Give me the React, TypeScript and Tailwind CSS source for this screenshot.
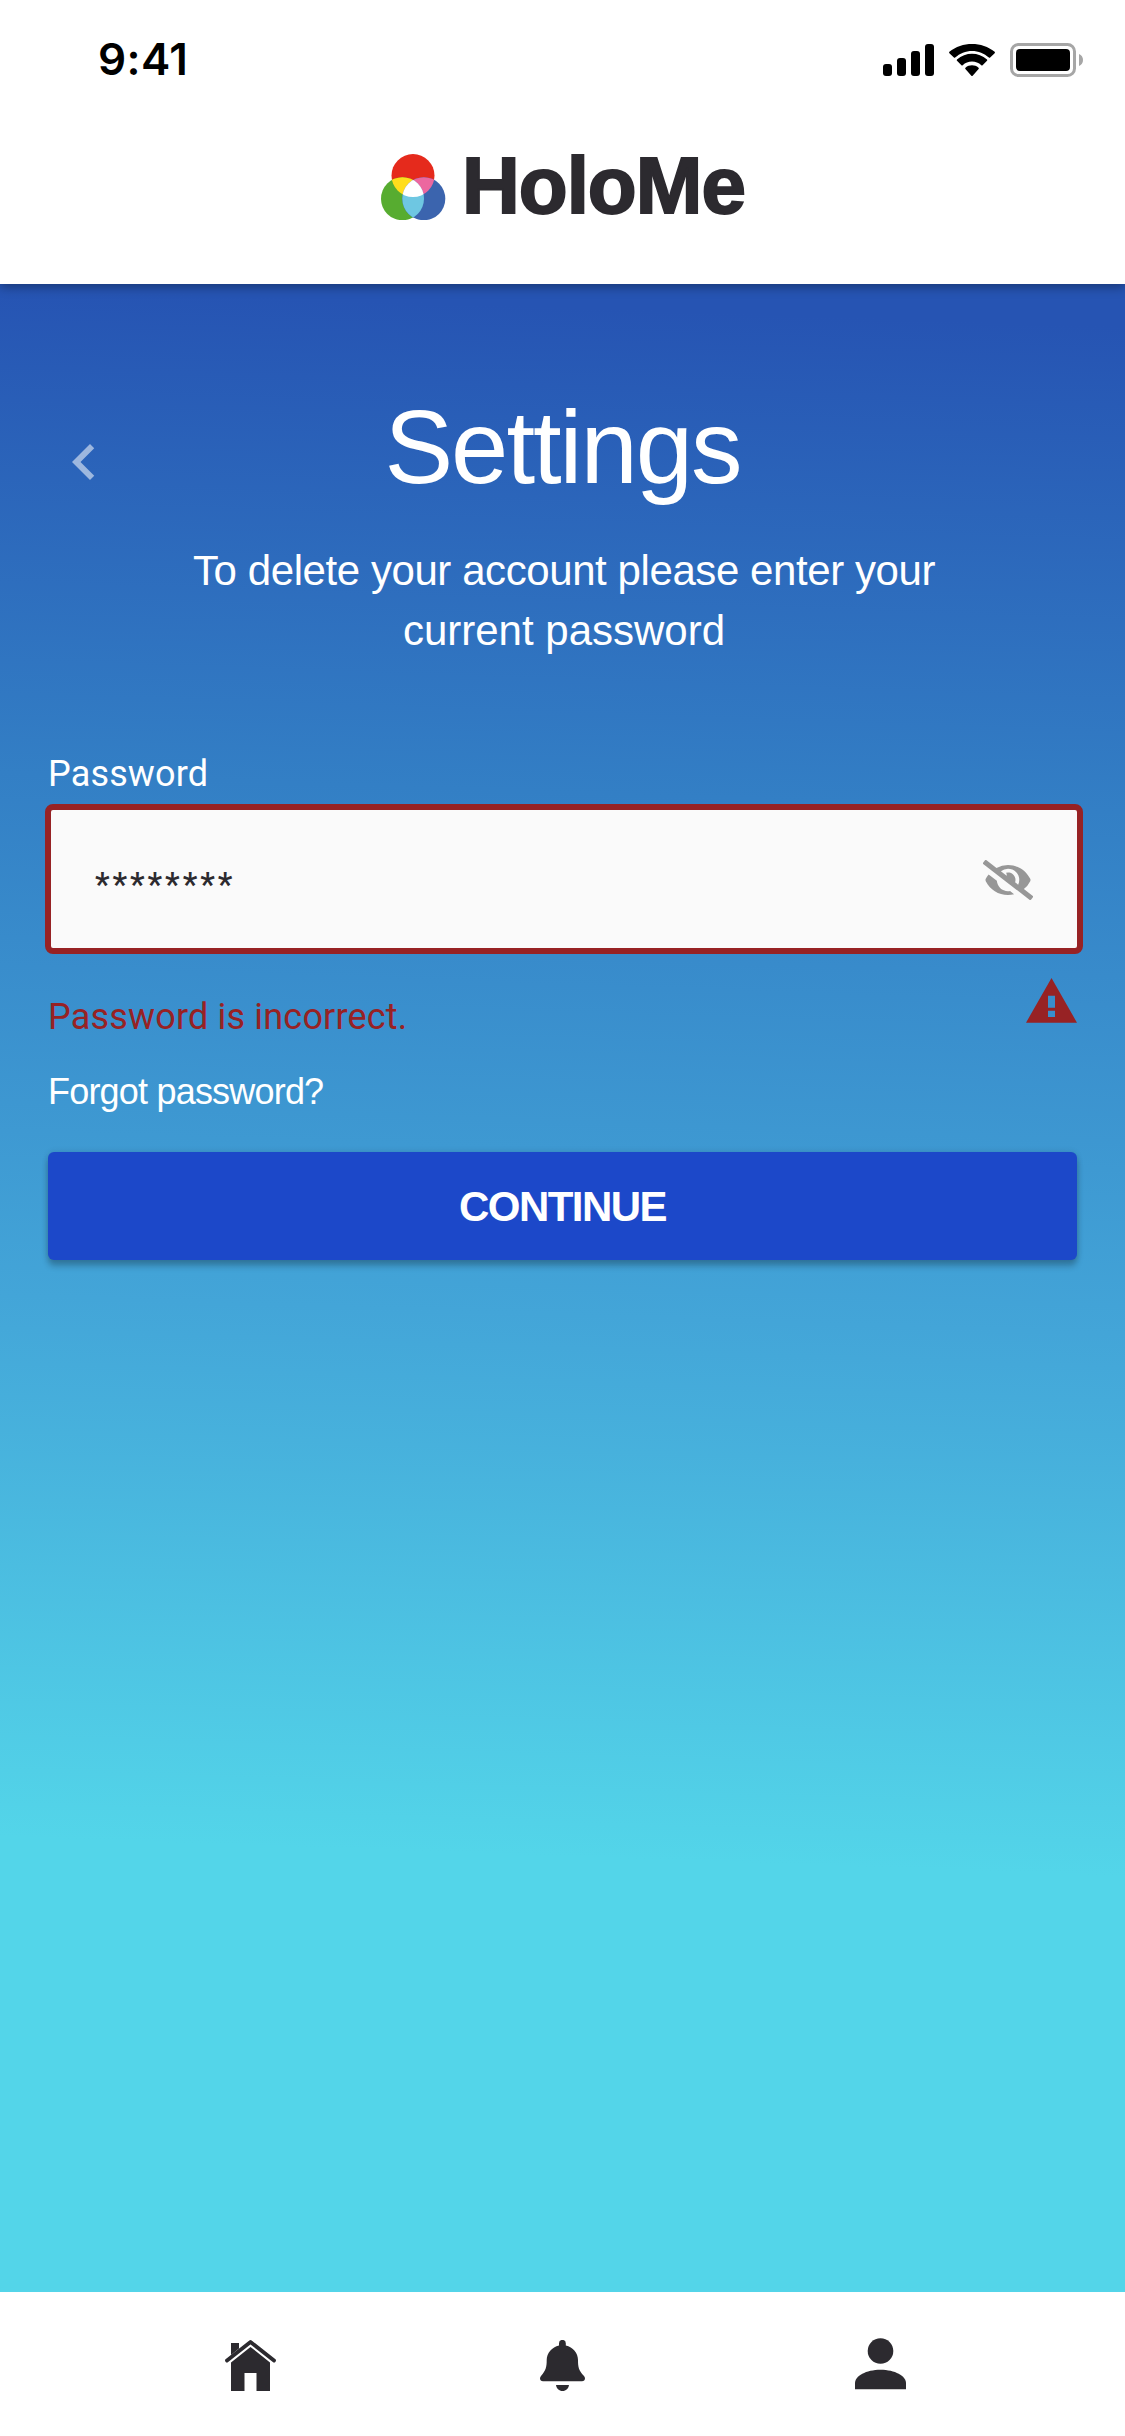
import React from 'react';

function SignalIcon() {
  return (
    <svg className="h-8 w-[51px]" viewBox="0 0 51 32" fill="#000">
      <rect x="0" y="20" width="9" height="12" rx="3" />
      <rect x="14" y="14" width="9" height="18" rx="3" />
      <rect x="28" y="7" width="9" height="25" rx="3" />
      <rect x="42" y="0" width="9" height="32" rx="3" />
    </svg>
  );
}

function WifiIcon() {
  return (
    <svg className="ml-[15px] h-[33px] w-[46px]" viewBox="0 0 46 33" fill="#000">
      <path d="M23 6.900c6.300 0 12.300 2.400 16.900 6.700.35.33.9.33 1.250 0l4.500-4.450c.4-.37.4-.95 0-1.300C33-2.600 13-2.600.4 7.850c-.4.35-.4.93 0 1.300l4.500 4.450c.35.33.9.33 1.250 0C10.700 9.300 16.700 6.900 23 6.900z" />
      <path d="M23 17.600c3.450 0 6.800 1.300 9.300 3.600.36.33.9.33 1.250 0l4.450-4.500c.4-.38.4-.95 0-1.300-8.500-7.700-21.500-7.700-30 0-.4.35-.4.92 0 1.300l4.450 4.500c.35.33.9.33 1.250 0 2.500-2.300 5.850-3.600 9.300-3.600z" />
      <path d="M29.600 25c.4-.35.38-.95-.04-1.270-3.800-3.200-9.320-3.200-13.120 0-.42.32-.44.92-.04 1.270l5.950 6.800c.36.36.94.36 1.300 0z" />
    </svg>
  );
}

function BatteryIcon() {
  return (
    <svg className="ml-[15px] h-[34px] w-[73px]" viewBox="0 0 73 34">
      <rect x="1.500" y="1.500" width="63" height="31" rx="7" fill="none" stroke="#a6a6a6" strokeWidth="3" />
      <path d="M69 11v12c2.500-1 4-3.300 4-6s-1.500-5-4-6z" fill="#a6a6a6" />
      <rect x="6" y="6" width="54" height="22" rx="4" fill="#000" />
    </svg>
  );
}

function Logo() {
  return (
    <svg className="h-[66px] w-[65px]" viewBox="381 153.700 65 66">
      <defs>
        <clipPath id="red"><circle cx="413" cy="175.300" r="21.500" /></clipPath>
        <clipPath id="green"><circle cx="402.500" cy="198.400" r="21.500" /></clipPath>
      </defs>
      <circle cx="413" cy="175.300" r="21.500" fill="#e52a1c" />
      <circle cx="402.500" cy="198.400" r="21.500" fill="#57ac30" />
      <circle cx="423.800" cy="198.400" r="21.500" fill="#3b64ae" />
      <circle cx="402.500" cy="198.400" r="21.500" fill="#ffdd1c" clipPath="url(#red)" />
      <circle cx="423.800" cy="198.400" r="21.500" fill="#ec679f" clipPath="url(#red)" />
      <circle cx="423.800" cy="198.400" r="21.500" fill="#6ec7e2" clipPath="url(#green)" />
      <g clipPath="url(#red)">
        <circle cx="423.800" cy="198.400" r="21.500" fill="#fff" clipPath="url(#green)" />
      </g>
    </svg>
  );
}

function EyeOffIcon() {
  return (
    <svg className="mt-0.5 h-10 w-[50px]" viewBox="0 0 640 512" fill="#979797">
      <path d="M320 400c-75.870 0-137.250-58.710-142.900-133.110L72.200 185.820c-13.790 17.300-26.480 35.590-36.720 55.590a32.350 32.350 0 0 0 0 29.190C89.710 376.410 197.070 448 320 448c26.910 0 52.870-4 77.890-10.460L346 397.390a144.130 144.130 0 0 1-26 2.610zm313.820 58.100l-110.550-85.440a331.250 331.250 0 0 0 81.250-102.070 32.350 32.350 0 0 0 0-29.190C550.290 135.590 442.930 64 320 64a308.150 308.150 0 0 0-147.320 37.700L45.460 3.370A16 16 0 0 0 23 6.180L3.370 31.450A16 16 0 0 0 6.180 53.900l588.360 454.730a16 16 0 0 0 22.460-2.810l19.640-25.270a16 16 0 0 0-2.820-22.450zm-183.720-142l-39.300-30.380A94.750 94.750 0 0 0 416 256a94.760 94.760 0 0 0-121.310-92.210A47.650 47.650 0 0 1 304 192a46.640 46.640 0 0 1-1.540 10l-73.610-56.890A142.310 142.310 0 0 1 320 112a143.920 143.920 0 0 1 144 144c0 21.630-5.290 41.790-13.900 60.110z" />
    </svg>
  );
}

function WarningIcon() {
  return (
    <svg className="h-[45px] w-[51px]" viewBox="0 0 51 45" fill="#972224">
      <path fillRule="evenodd" d="M25.500 0 51 44.700H0zM22 17.700v12h7v-12zM22 32.700v6.300h7v-6.300z" />
    </svg>
  );
}

function HomeIcon() {
  return (
    <svg className="h-[51px] w-[51px]" viewBox="0 0 51 51" fill="#2c2a2f">
      <path d="M6 3h8v5.500l-8 6.500z" />
      <path d="M2 20.500 25.500 2 49 20.500" fill="none" stroke="#2c2a2f" strokeWidth="3.800" strokeLinecap="round" strokeLinejoin="round" />
      <path d="M25.500 7 45 22.500V51H31.500V33h-12v18H6V22.500z" />
    </svg>
  );
}

function BellIcon() {
  return (
    <svg className="h-[51px] w-[45px]" viewBox="0 0 45 51" fill="#2c2a2f">
      <path d="M19 5.500V3.300a3.400 3.400 0 0 1 6.800 0v2.200C33 7 38 13 38 20c0 7 .5 10 6 16 2 2.400.8 5.300-2 5.300H3C.2 41.300-1 38.400 1 36c5-6 5.700-9 5.700-16C6.700 13 12 7 19 5.500z" />
      <path d="M16 45h13c-.5 3.600-3 6-6.500 6s-6-2.400-6.500-6z" />
    </svg>
  );
}

function PersonIcon() {
  return (
    <svg className="h-[52px] w-[51px]" viewBox="0 0 51 52" fill="#2c2a2f">
      <circle cx="25.500" cy="13" r="12.800" />
      <path d="M0 51.300V45c0-7 11-13.300 25.500-13.300S51 38 51 45v6.300z" />
    </svg>
  );
}

export default function App() {
  return (
    <div className="flex h-[2436px] w-[1125px] flex-col overflow-hidden bg-[linear-gradient(182deg,#2654b3_13.2%,#337fc5_32.8%,#43a5d8_53.9%,#53d5e9_75.8%)] font-['Liberation_Sans',sans-serif] text-white">
      <header className="z-10 flex h-[284px] shrink-0 flex-col bg-white text-black shadow-[0_3px_10px_rgba(0,0,0,0.35)]">
        <div className="flex h-[120px] items-center pl-[98px] pr-[42px]">
          <span className="mb-[3px] font-['Inter',sans-serif] text-[44px] font-semibold leading-none tracking-[0.400px]">9:41</span>
          <div className="ml-auto flex items-center">
            <SignalIcon />
            <WifiIcon />
            <BatteryIcon />
          </div>
        </div>
        <div className="flex h-[134px] items-center pl-[381px]">
          <Logo />
          <span className="mb-[2px] ml-4 text-[80px] font-bold leading-none tracking-[-1px] text-[#2c2a2f] [-webkit-text-stroke:2px_#2c2a2f]">HoloMe</span>
        </div>
      </header>

      <main className="flex flex-1 flex-col px-12">
        <div className="mt-[106px] grid h-[118px] grid-cols-[72px_1fr_72px] items-center">
          <button aria-label="Back" className="mt-[26px]">
            <svg className="h-[72px] w-[72px]" viewBox="0 0 24 24" fill="#fff" fillOpacity="0.540">
              <path d="M15.410 7.410 14 6l-6 6 6 6 1.410-1.410L10.830 12z" />
            </svg>
          </button>
          <h1 className="mb-[3px] text-center text-[103px] font-normal leading-none tracking-[-2px]">Settings</h1>
        </div>
        <p className="mt-[33px] pl-[3px] text-center text-[42px] leading-[60px]">
          <span className="tracking-[-0.420px]">To delete your account please enter your</span>
          <br />
          current password
        </p>

        <label className="mt-[92px] font-['Roboto',sans-serif] text-[36px] leading-[42px] tracking-[0.150px]">Password</label>
        <div className="-mx-[3px] mt-[9px] flex h-[150px] w-[1038px] items-center justify-between rounded-lg border-[6px] border-[#972224] bg-[#fafafa] px-11 font-['Roboto',sans-serif] text-[#2c2a2f]">
          <span className="mt-3 text-[33px] font-medium tracking-[2.900px]">********</span>
          <EyeOffIcon />
        </div>
        <div className="mt-6 flex h-[60px] items-start justify-between">
          <span className="mt-[18px] font-['Roboto',sans-serif] text-[36px] leading-[42px] tracking-[0.180px] text-[#972224]">Password is incorrect.</span>
          <WarningIcon />
        </div>
        <a className="mt-[33px] text-[36px] leading-[42px] tracking-[-0.800px]">Forgot password?</a>
        <button className="mt-[39px] flex h-[108px] w-[1029px] shrink-0 items-center justify-center rounded-md bg-[#1c48c9] text-[42px] font-bold tracking-[-1.550px] shadow-[0_6px_6px_rgba(0,0,0,0.240),0_0_6px_rgba(0,0,0,0.120)]">
          CONTINUE
        </button>
      </main>

      <nav className="flex h-36 shrink-0 items-start bg-white pl-[225px] pt-12">
        <HomeIcon />
        <div className="ml-[264px]"><BellIcon /></div>
        <div className="-mt-0.5 ml-[270px]"><PersonIcon /></div>
      </nav>
    </div>
  );
}
